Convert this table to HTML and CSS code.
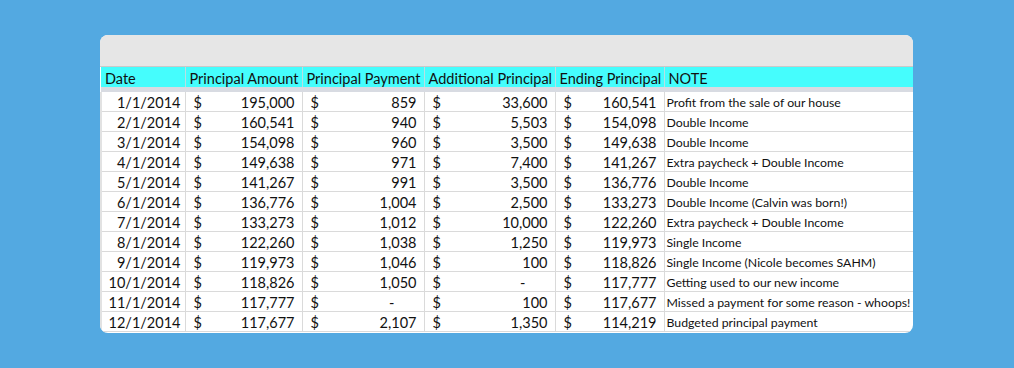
FILE: index.html
```html
<!DOCTYPE html>
<html>
<head>
<meta charset="utf-8">
<link rel="stylesheet" href="styles.css">
</head>
<body>
<div class="card">
  <div class="toolbar"></div>
  <table class="sheet">
    <colgroup>
      <col class="c-date"><col class="c-amt"><col class="c-pay"><col class="c-add"><col class="c-end"><col class="c-note">
    </colgroup>
    <thead>
      <tr class="head">
        <th>Date</th><th>Principal Amount</th><th>Principal Payment</th><th>Additional Principal</th><th>Ending Principal</th><th>NOTE</th>
      </tr>
      <tr class="band"><td colspan="6"></td></tr>
    </thead>
    <tbody>
      <tr><td class="date">1/1/2014</td><td><div class="money"><span>$</span><span>195,000</span></div></td><td><div class="money"><span>$</span><span>859</span></div></td><td><div class="money"><span>$</span><span>33,600</span></div></td><td><div class="money"><span>$</span><span>160,541</span></div></td><td class="note">Profit from the sale of our house</td></tr>
      <tr><td class="date">2/1/2014</td><td><div class="money"><span>$</span><span>160,541</span></div></td><td><div class="money"><span>$</span><span>940</span></div></td><td><div class="money"><span>$</span><span>5,503</span></div></td><td><div class="money"><span>$</span><span>154,098</span></div></td><td class="note">Double Income</td></tr>
      <tr><td class="date">3/1/2014</td><td><div class="money"><span>$</span><span>154,098</span></div></td><td><div class="money"><span>$</span><span>960</span></div></td><td><div class="money"><span>$</span><span>3,500</span></div></td><td><div class="money"><span>$</span><span>149,638</span></div></td><td class="note">Double Income</td></tr>
      <tr><td class="date">4/1/2014</td><td><div class="money"><span>$</span><span>149,638</span></div></td><td><div class="money"><span>$</span><span>971</span></div></td><td><div class="money"><span>$</span><span>7,400</span></div></td><td><div class="money"><span>$</span><span>141,267</span></div></td><td class="note">Extra paycheck + Double Income</td></tr>
      <tr><td class="date">5/1/2014</td><td><div class="money"><span>$</span><span>141,267</span></div></td><td><div class="money"><span>$</span><span>991</span></div></td><td><div class="money"><span>$</span><span>3,500</span></div></td><td><div class="money"><span>$</span><span>136,776</span></div></td><td class="note">Double Income</td></tr>
      <tr><td class="date">6/1/2014</td><td><div class="money"><span>$</span><span>136,776</span></div></td><td><div class="money"><span>$</span><span>1,004</span></div></td><td><div class="money"><span>$</span><span>2,500</span></div></td><td><div class="money"><span>$</span><span>133,273</span></div></td><td class="note">Double Income (Calvin was born!)</td></tr>
      <tr><td class="date">7/1/2014</td><td><div class="money"><span>$</span><span>133,273</span></div></td><td><div class="money"><span>$</span><span>1,012</span></div></td><td><div class="money"><span>$</span><span>10,000</span></div></td><td><div class="money"><span>$</span><span>122,260</span></div></td><td class="note">Extra paycheck + Double Income</td></tr>
      <tr><td class="date">8/1/2014</td><td><div class="money"><span>$</span><span>122,260</span></div></td><td><div class="money"><span>$</span><span>1,038</span></div></td><td><div class="money"><span>$</span><span>1,250</span></div></td><td><div class="money"><span>$</span><span>119,973</span></div></td><td class="note">Single Income</td></tr>
      <tr><td class="date">9/1/2014</td><td><div class="money"><span>$</span><span>119,973</span></div></td><td><div class="money"><span>$</span><span>1,046</span></div></td><td><div class="money"><span>$</span><span>100</span></div></td><td><div class="money"><span>$</span><span>118,826</span></div></td><td class="note">Single Income (Nicole becomes SAHM)</td></tr>
      <tr><td class="date">10/1/2014</td><td><div class="money"><span>$</span><span>118,826</span></div></td><td><div class="money"><span>$</span><span>1,050</span></div></td><td><div class="money"><span>$</span><span class="dash">-</span></div></td><td><div class="money"><span>$</span><span>117,777</span></div></td><td class="note">Getting used to our new income</td></tr>
      <tr><td class="date">11/1/2014</td><td><div class="money"><span>$</span><span>117,777</span></div></td><td><div class="money"><span>$</span><span class="dash">-</span></div></td><td><div class="money"><span>$</span><span>100</span></div></td><td><div class="money"><span>$</span><span>117,677</span></div></td><td class="note">Missed a payment for some reason - whoops!</td></tr>
      <tr><td class="date">12/1/2014</td><td><div class="money"><span>$</span><span>117,677</span></div></td><td><div class="money"><span>$</span><span>2,107</span></div></td><td><div class="money"><span>$</span><span>1,350</span></div></td><td><div class="money"><span>$</span><span>114,219</span></div></td><td class="note">Budgeted principal payment</td></tr>
    </tbody>
  </table>
</div>
</body>
</html>
```
FILE: styles.css
```css
html, body {
  margin: 0;
  padding: 0;
}
body {
  background: #53a9e1;
  padding: 35px 101px 0 100px;
  font-family: Lato, "Open Sans", sans-serif;
  color: #111;
}
.card {
  background: #fff;
  border-radius: 8px;
  overflow: hidden;
  height: 298px;
}
.toolbar {
  height: 31px;
  background: #e6e6e6;
  border-bottom: 1px solid #c9c9c9;
}
.sheet {
  border-collapse: collapse;
  table-layout: fixed;
  width: 813px;
}
.c-date { width: 84px; }
.c-amt { width: 117px; }
.c-pay { width: 122px; }
.c-add { width: 131px; }
.c-end { width: 109px; }
.c-note { width: 250px; }
.head th {
  background: #45fdfd;
  height: 17px;
  padding: 3px 0 0 4px;
  font-weight: normal;
  font-size: 14.5px;
  text-align: left;
  border-left: 1px solid #b9dfe2;
  white-space: nowrap;
  line-height: 17px;
}
.head th:first-child { border-left: none; }
.band td {
  height: 5px;
  padding: 0;
  background: #d8dbe2;
}
tbody td {
  height: 17px;
  padding: 2px 7px 0 8px;
  border-bottom: 1px solid #dadada;
  border-left: 1px solid #dadada;
  font-size: 14.5px;
  line-height: 17px;
  white-space: nowrap;
  overflow: hidden;
}
tbody td:first-child { border-left: 2px solid #e2e2e2; }
td.date {
  text-align: right;
  padding-left: 0;
  padding-right: 4px;
}
.money {
  display: flex;
  justify-content: space-between;
}
.dash {
  padding-right: 22px;
}
td.note {
  font-size: 12.3px;
  padding-left: 2px;
  padding-right: 2px;
}
```
